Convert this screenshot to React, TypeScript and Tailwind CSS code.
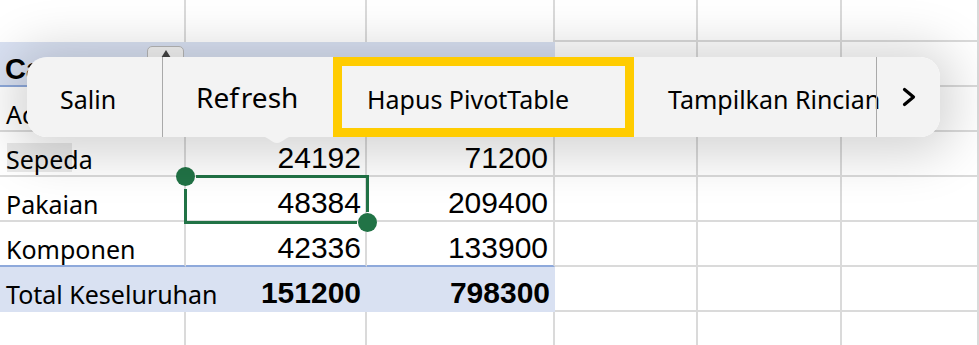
import React from "react"

const label = "font-['Noto_Sans',sans-serif] text-[25px] leading-none text-black whitespace-nowrap"
const num = "font-['Liberation_Sans',Arial,sans-serif] text-[30px] leading-none text-black"
const grid = "border-[#dadada]"

const widths = ["w-[186px]", "w-[181px]", "w-[188px]", "w-[143px]", "w-[144px]", "w-[137px]"]

interface Item {
  name: string
  units: number
  sales: number
}

const items: Item[] = [
  {name: "Accessories", units: 36288, sales: 383800},
  {name: "Sepeda", units: 24192, sales: 71200},
  {name: "Pakaian", units: 48384, sales: 209400},
  {name: "Komponen", units: 42336, sales: 133900},
]

function EmptyCells({bottom = true}: {bottom?: boolean}) {
  return (
    <>
      {widths.slice(3).map((w, i) => (
        <div
          key={i}
          className={`${w} shrink-0 h-full box-border border-r-2 ${bottom ? "border-b-2" : ""} ${grid}`}
        />
      ))}
    </>
  )
}

function DataRow({item, last}: {item: Item; last: boolean}) {
  let bottom = last ? "border-b-[#8ea9db]" : ""
  return (
    <div className="flex h-[45px]">
      <div
        className={`${widths[0]} relative shrink-0 h-full box-border flex items-end pl-[6px] pb-[3px] border-r-2 border-b-2 ${grid} ${bottom} ${label}`}
      >
        {item.name === "Sepeda" && (
          <div className="absolute left-[7px] top-[11px] w-[65px] h-[29px] bg-[#e9e9e9]" />
        )}
        <span className="relative">{item.name}</span>
      </div>
      <div
        className={`${widths[1]} shrink-0 h-full box-border flex items-end justify-end pr-[4px] pb-[2px] border-r-2 border-b-2 ${grid} ${bottom} ${num}`}
      >
        {item.units}
      </div>
      <div
        className={`${widths[2]} shrink-0 h-full box-border flex items-end justify-end pr-[5px] pb-[2px] border-r-2 border-b-2 ${grid} ${bottom} ${num}`}
      >
        {item.sales}
      </div>
      <EmptyCells />
    </div>
  )
}

export default function App() {
  let totalUnits = items.reduce((s, i) => s + i.units, 0)
  let totalSales = items.reduce((s, i) => s + i.sales, 0)

  return (
    <div className="relative w-[979px] h-[345px] overflow-hidden bg-white">
      {/* sheet */}
      <div className="flex flex-col">
        <div className="flex h-[42px]">
          {widths.map((w, i) => (
            <div
              key={i}
              className={`${w} shrink-0 h-full box-border border-r-2 ${i > 2 ? "border-b-2" : ""} ${grid}`}
            />
          ))}
        </div>

        <div className="flex h-[45px]">
          <div className="flex h-full bg-[#d9e1f2] border-b-2 border-[#8ea9db] box-border">
            <div
              className={`${widths[0]} relative shrink-0 h-full flex items-end pl-[5px] pb-[1px] font-['Liberation_Sans',Arial,sans-serif] font-bold text-[29px] leading-none whitespace-nowrap`}
            >
              Category
              <div className="absolute left-[147px] top-[4px] w-[37px] h-[26px] rounded-[5px] border border-[#b8b8b8] bg-[#f4f4f4] flex justify-center pt-[3px]">
                <svg width="10" height="8" viewBox="0 0 10 8">
                  <path d="M5 0 L10 8 L0 8 Z" fill="#444" />
                </svg>
              </div>
            </div>
            <div className={`${widths[1]} shrink-0 h-full`} />
            <div className={`${widths[2]} shrink-0 h-full`} />
          </div>
          <EmptyCells />
        </div>

        {items.map((item, i) => (
          <DataRow key={item.name} item={item} last={i === items.length - 1} />
        ))}

        <div className="flex h-[45px]">
          <div className="flex h-full bg-[#d9e1f2]">
            <div className={`${widths[0]} shrink-0 h-full flex items-end pl-[6px] pb-[5px] ${label}`}>
              Total Keseluruhan
            </div>
            <div
              className={`${widths[1]} shrink-0 h-full flex items-end justify-end pr-[6px] pb-[4px] font-bold ${num}`}
            >
              {totalUnits}
            </div>
            <div
              className={`${widths[2]} shrink-0 h-full flex items-end justify-end pr-[5px] pb-[4px] font-bold ${num}`}
            >
              {totalSales}
            </div>
          </div>
          <EmptyCells />
        </div>

        <div className="flex h-[33px]">
          {widths.map((w, i) => (
            <div key={i} className={`${w} shrink-0 h-full box-border border-r-2 ${grid}`} />
          ))}
        </div>
      </div>

      {/* selected cell */}
      <div className="absolute left-[196px] top-[175px] w-[173px] h-[3px] bg-[#217346]" />
      <div className="absolute left-[366px] top-[175px] w-[3px] h-[37px] bg-[#217346]" />
      <div className="absolute left-[184px] top-[189px] w-[3px] h-[35px] bg-[#217346]" />
      <div className="absolute left-[184px] top-[221px] w-[173px] h-[3px] bg-[#217346]" />
      <div className="absolute left-[176px] top-[167px] w-[19px] h-[19px] rounded-full bg-[#217346]" />
      <div className="absolute left-[358px] top-[213px] w-[19px] h-[19px] rounded-full bg-[#217346]" />

      {/* context menu */}
      <div className="absolute left-[27px] top-[57px] w-[913px] h-[80px] rounded-[20px] shadow-[0_4px_50px_14px_rgba(0,0,0,0.17)]" />
      <svg className="absolute left-[255px] top-[135px]" width="44" height="9" viewBox="0 0 44 9">
        <path d="M0 0 C13 0 16 8 22 8 C28 8 31 0 44 0 Z" fill="#f3f3f3" />
      </svg>
      <div className="absolute left-[27px] top-[57px] w-[913px] h-[80px] rounded-[20px] bg-[#f3f3f3] flex items-stretch font-['Noto_Sans',sans-serif] text-black">
        <div className="w-[135px] shrink-0 flex items-center pl-[33px] pt-[4px] text-[25px] leading-none">Salin</div>
        <div className="w-px shrink-0 bg-[#a9a9a9]" />
        <div className="w-[170px] shrink-0 flex items-center pl-[33px] text-[28px] leading-none">
          Ref<span className="ml-[2px]">resh</span>
        </div>
        <div className="w-[301px] shrink-0 box-border border-[9px] border-[#ffcc00] flex items-center pl-[25px] pt-[4px] text-[25px] leading-none whitespace-nowrap">
          Hapus PivotTable
        </div>
        <div className="w-[242px] shrink-0 flex items-center pl-[34px] pt-[5px] text-[25px] leading-none whitespace-nowrap">
          Tampilkan Rincian
        </div>
        <div className="w-px shrink-0 bg-[#a9a9a9]" />
        <div className="flex-1 flex items-center justify-center">
          <svg width="14" height="20" viewBox="0 0 14 20">
            <polyline
              points="2.5,2.5 11.5,10 2.5,17.5"
              fill="none"
              stroke="#000"
              strokeWidth="3.2"
              strokeLinecap="round"
              strokeLinejoin="round"
            />
          </svg>
        </div>
      </div>
    </div>
  )
}
